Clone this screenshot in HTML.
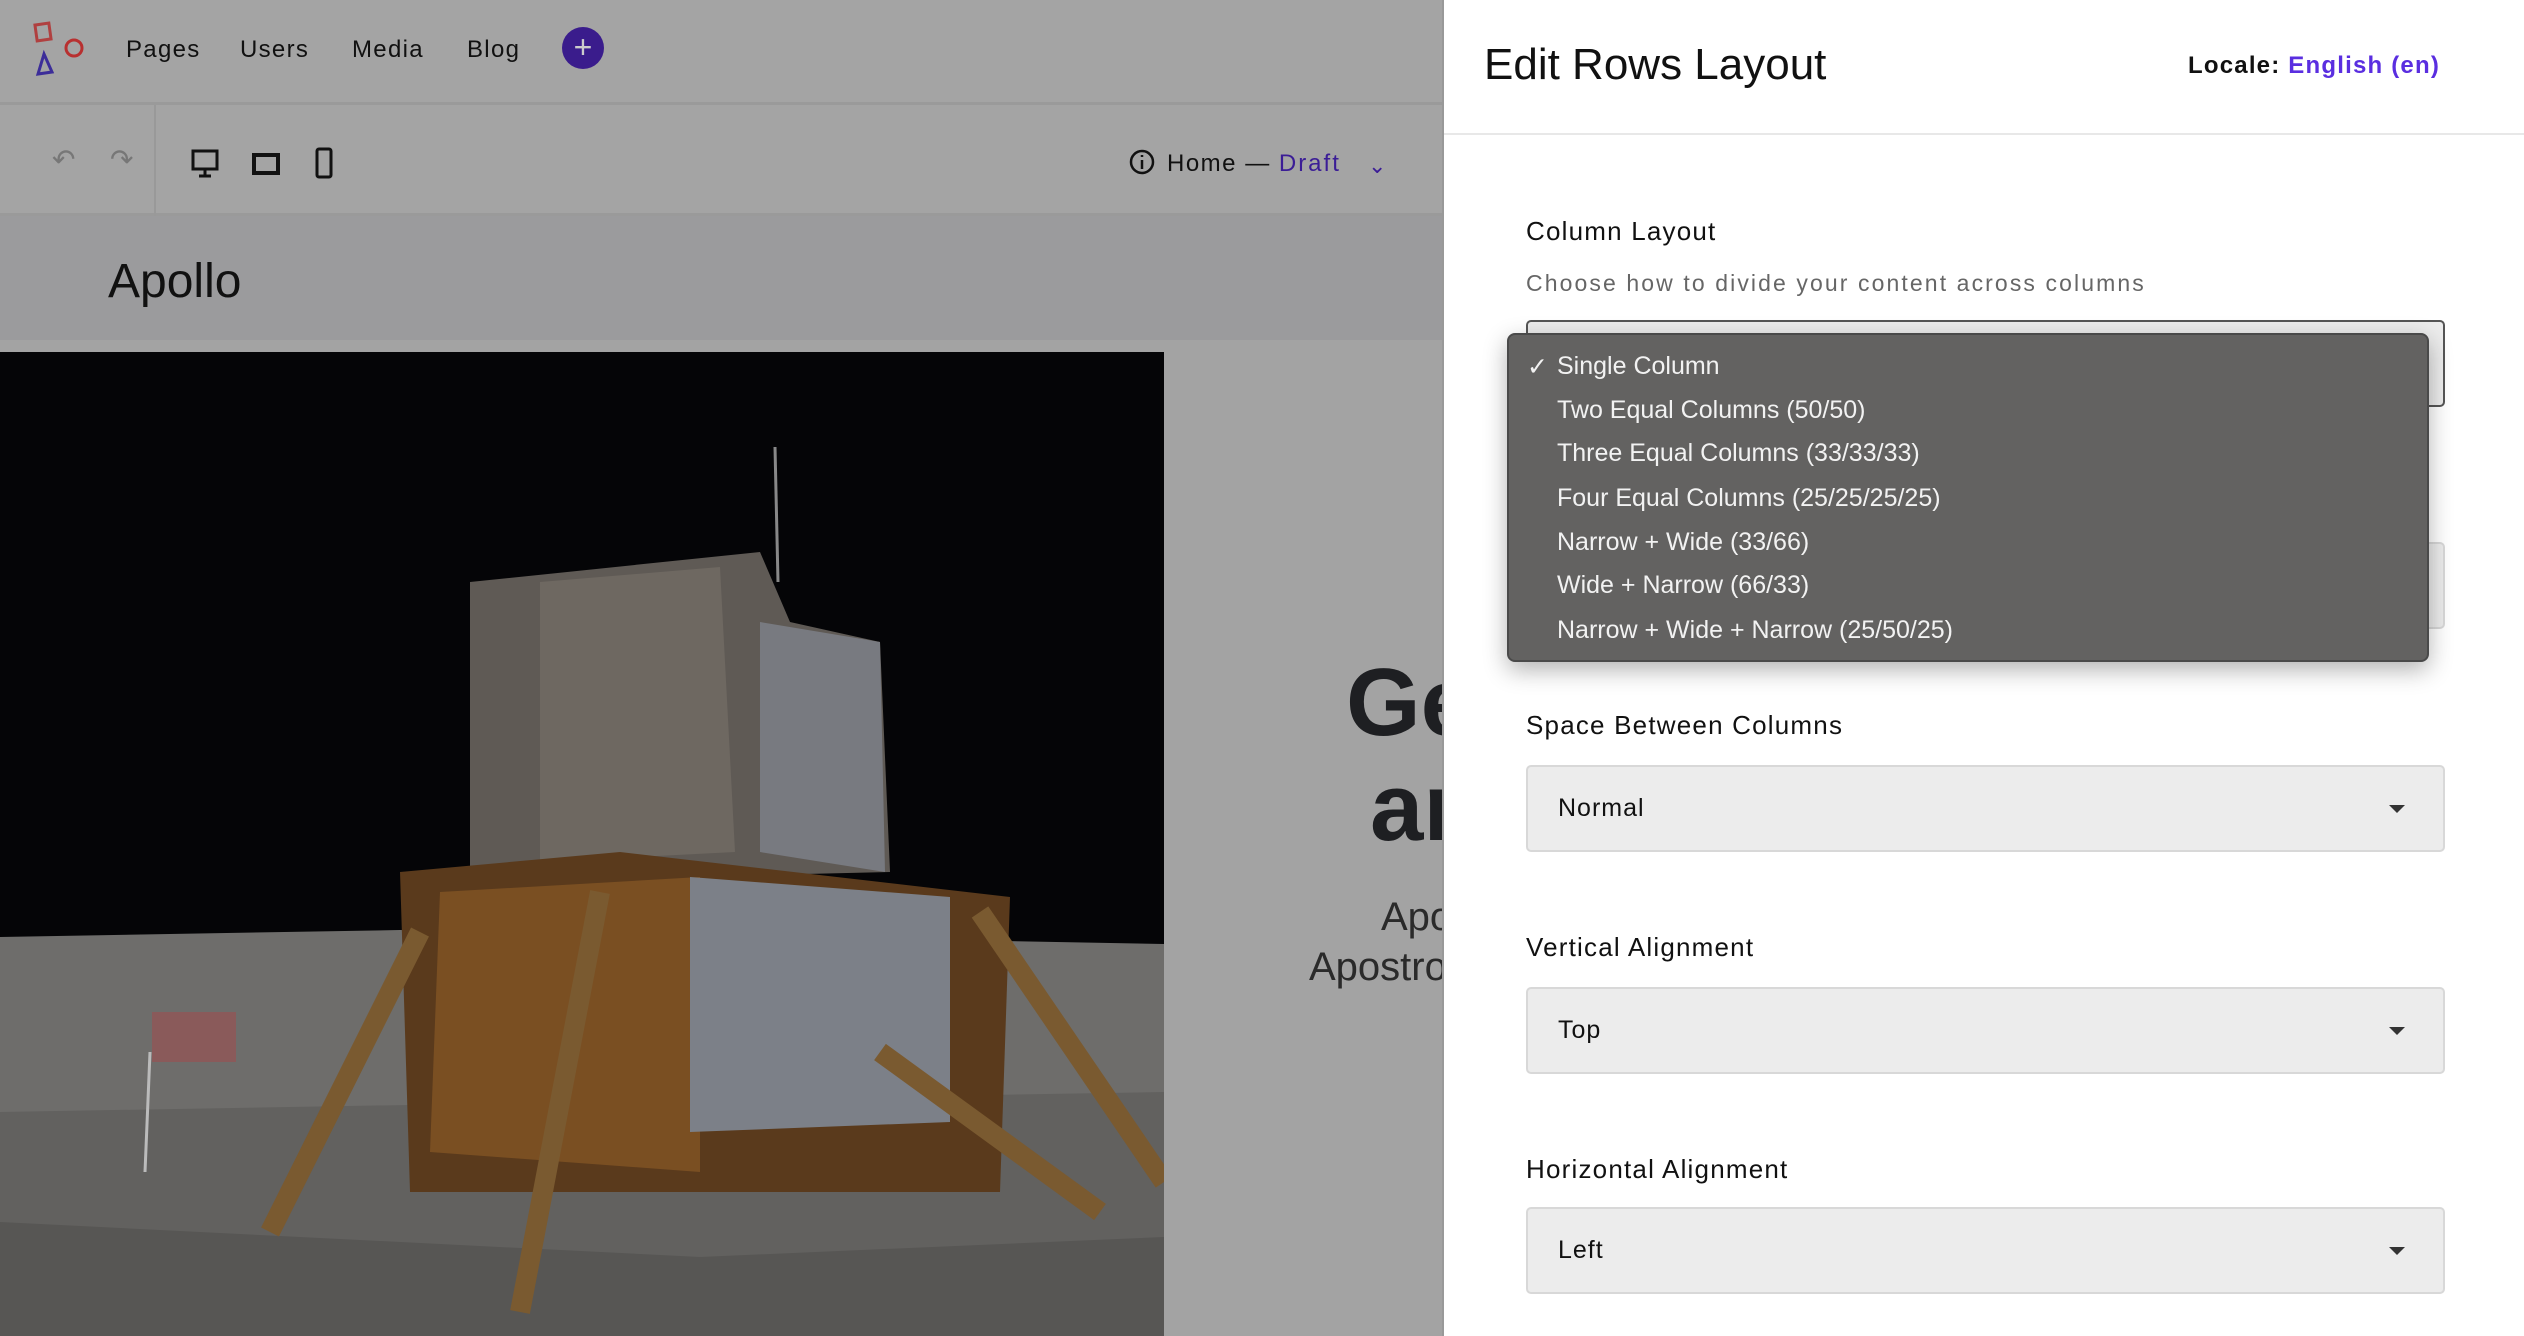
<!DOCTYPE html>
<html><head><meta charset="utf-8"><style>
*{margin:0;padding:0;box-sizing:border-box}
body{width:2524px;height:1336px;overflow:hidden;position:relative;font-family:"Liberation Sans",sans-serif;background:#a3a3a3}
.abs{position:absolute}
.nav{left:0;top:0;width:1442px;height:105px;background:#a4a4a4;border-bottom:3px solid #9a9a9a}
.nav span{position:absolute;top:36px;font-size:24px;color:#111;letter-spacing:1.3px}
.tb{left:0;top:105px;width:1442px;height:111px;background:#a4a4a4;border-bottom:3px solid #9a9a9a}
.band{left:0;top:216px;width:1442px;height:124px;background:#9b9b9d}
.panel{left:1442px;top:0;width:1082px;height:1336px;background:#fff;border-left:2px solid #999}
.lbl{position:absolute;left:82px;font-size:26px;color:#111;letter-spacing:1.2px}
.sel{position:absolute;left:82px;width:919px;height:87px;background:#ececec;border:2px solid #d8d8d8;border-radius:5px}
.sel span{position:absolute;left:30px;top:27px;font-size:25px;color:#111;letter-spacing:1px}
.sel i{position:absolute;right:38px;top:38px;border-left:8px solid transparent;border-right:8px solid transparent;border-top:8px solid #333}
.dd{left:1507px;top:333px;width:922px;height:329px;background:#636261;border:2px solid #4a4a4a;border-radius:8px;box-shadow:0 8px 24px rgba(0,0,0,.3)}
.dd div{position:absolute;left:48px;font-size:25px;color:#f2f2f2}
</style></head><body>
<div class="abs nav">
<svg class="abs" style="left:30px;top:20px" width="58" height="58" viewBox="0 0 58 58"><rect x="6" y="4" width="14" height="16" fill="none" stroke="#b04040" stroke-width="3" transform="rotate(-8 13 12)"/><circle cx="44" cy="28" r="8" fill="none" stroke="#b83030" stroke-width="3"/><path d="M14 34 L22 52 L8 54 Z" fill="none" stroke="#3c2d99" stroke-width="3"/></svg>
<span style="left:126px">Pages</span><span style="left:240px">Users</span><span style="left:352px">Media</span><span style="left:467px">Blog</span>
<div class="abs" style="left:562px;top:27px;width:42px;height:42px;border-radius:50%;background:#3a1c8c;color:#ccc;font-size:32px;text-align:center;line-height:40px">+</div>
</div>
<div class="abs tb">
<div class="abs" style="left:154px;top:0;width:2px;height:111px;background:#999"></div>
<span class="abs" style="left:52px;top:38px;font-size:28px;color:#777">↶</span>
<span class="abs" style="left:110px;top:38px;font-size:28px;color:#777">↷</span>
<svg class="abs" style="left:190px;top:42px" width="150" height="34" viewBox="0 0 150 34"><rect x="3" y="4" width="24" height="18" fill="none" stroke="#111" stroke-width="3"/><path d="M15 22v6M9 29h12" stroke="#111" stroke-width="3"/><rect x="64" y="8" width="24" height="18" fill="none" stroke="#111" stroke-width="4"/><rect x="127" y="2" width="14" height="28" rx="2" fill="none" stroke="#111" stroke-width="3"/></svg>
<svg class="abs" style="left:1128px;top:43px" width="28" height="28"><circle cx="14" cy="14" r="11" fill="none" stroke="#111" stroke-width="2.5"/><path d="M14 12v9M14 7v2" stroke="#111" stroke-width="2.5"/></svg>
<span class="abs" style="left:1167px;top:45px;font-size:24px;color:#111;letter-spacing:1.5px">Home — <span style="color:#3b1d96;letter-spacing:2px">Draft</span></span>
<span class="abs" style="left:1368px;top:48px;font-size:22px;color:#3b1d96">⌄</span>
</div>
<div class="abs band"><span class="abs" style="left:108px;top:38px;font-size:48px;color:#111">Apollo</span></div>
<svg class="abs" style="left:0;top:352px" width="1164" height="984" viewBox="0 0 1164 984">
<rect width="1164" height="984" fill="#050507"/>
<path d="M0 585 L400 578 L1164 592 L1164 984 L0 984Z" fill="#6e6d6b"/>
<path d="M0 760 L1164 740 L1164 984 L0 984Z" fill="#62615f"/>
<path d="M0 870 L300 885 L700 905 L1164 885 L1164 984 L0 984Z" fill="#575654"/>
<path d="M470 230 L760 200 L790 270 L880 290 L890 520 L470 530Z" fill="#5f5a55"/>
<path d="M540 230 L720 215 L735 500 L540 510Z" fill="#6e6861"/>
<path d="M760 270 L880 290 L885 520 L760 500Z" fill="#787a80"/>
<path d="M400 520 L620 500 L1010 545 L1000 840 L410 840Z" fill="#5a3a1c"/>
<path d="M440 540 L700 525 L700 820 L430 800Z" fill="#7a4f22"/>
<path d="M690 525 L950 545 L950 770 L690 780Z" fill="#7c8088"/>
<path d="M775 95 L778 230" stroke="#888" stroke-width="3"/>
<path d="M420 580 L270 880M600 540 L520 960M980 560 L1164 830M880 700 L1100 860" stroke="#7a5a30" stroke-width="20"/>
<path d="M150 700 L145 820" stroke="#bbb" stroke-width="3"/>
<rect x="152" y="660" width="84" height="50" fill="#8a5a5a"/>
</svg>
<div class="abs" style="left:1346px;top:650px;font-size:96px;font-weight:bold;color:#1e1f22;line-height:105px">Ge<br><span style="padding-left:24px">ar</span></div>
<div class="abs" style="left:1381px;top:895px;font-size:40px;color:#2a2a2a">Apo</div>
<div class="abs" style="left:1309px;top:945px;font-size:40px;color:#2a2a2a">Apostro</div>
<div class="abs panel">
<div class="abs" style="left:40px;top:40px;font-size:44px;color:#111">Edit Rows Layout</div>
<div class="abs" style="left:744px;top:52px;font-size:24px;color:#111;font-weight:bold;letter-spacing:1.2px">Locale: <span style="color:#5a2ee0">English (en)</span></div>
<div class="abs" style="left:0;top:133px;width:1082px;height:2px;background:#e8e8e8"></div>
<div class="lbl" style="top:216px">Column Layout</div>
<div class="abs" style="left:82px;top:270px;font-size:23px;color:#666;letter-spacing:2.1px">Choose how to divide your content across columns</div>
<div class="sel" style="top:320px;border-color:#555"></div>
<div class="sel" style="top:542px"></div>
<div class="lbl" style="top:710px">Space Between Columns</div>
<div class="sel" style="top:765px"><span>Normal</span><i></i></div>
<div class="lbl" style="top:932px">Vertical Alignment</div>
<div class="sel" style="top:987px"><span>Top</span><i></i></div>
<div class="lbl" style="top:1154px">Horizontal Alignment</div>
<div class="sel" style="top:1207px"><span>Left</span><i></i></div>
</div>
<div class="abs dd">
<div style="left:18px;top:17px">✓</div>
<div style="top:17px">Single Column</div>
<div style="top:61px">Two Equal Columns (50/50)</div>
<div style="top:104px">Three Equal Columns (33/33/33)</div>
<div style="top:149px">Four Equal Columns (25/25/25/25)</div>
<div style="top:193px">Narrow + Wide (33/66)</div>
<div style="top:236px">Wide + Narrow (66/33)</div>
<div style="top:281px">Narrow + Wide + Narrow (25/50/25)</div>
</div>
</body></html>
